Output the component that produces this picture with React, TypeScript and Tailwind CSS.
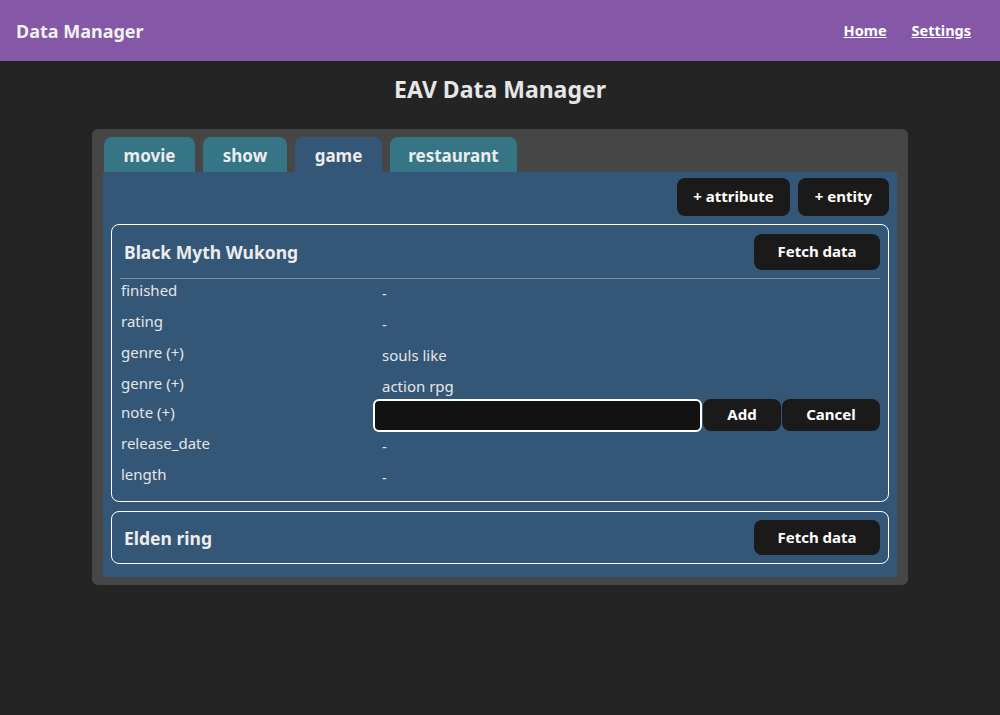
import { useState } from 'react';

const tabs = [
  { name: 'movie', w: 'w-[91px]' },
  { name: 'show', w: 'w-[84px]' },
  { name: 'game', w: 'w-[87px]' },
  { name: 'restaurant', w: 'w-[127px]' },
];

const rows = [
  { label: 'finished', value: '-', h: 'h-[31px]' },
  { label: 'rating', value: '-', h: 'h-[31px]' },
  { label: 'genre (+)', value: 'souls like', h: 'h-[31px]' },
  { label: 'genre (+)', value: 'action rpg', h: 'h-[29px]' },
  { label: 'note (+)', value: null, h: 'h-[31px]' },
  { label: 'release_date', value: '-', h: 'h-[31px]' },
  { label: 'length', value: '-', h: 'h-[31px]' },
];

function DarkButton({ children, className = '' }: { children: React.ReactNode; className?: string }) {
  return (
    <button className={`bg-[#1a1a1a] text-white font-bold text-[15px] rounded-lg ${className}`}>
      {children}
    </button>
  );
}

export default function App() {
  const [active, setActive] = useState('game');

  return (
    <div className="min-h-[715px] bg-[#242424] text-[#e6e6e6] font-['Noto_Sans',sans-serif]">
      <header className="h-[61px] bg-[#8458a6] flex items-center justify-between pl-4 pr-[29px]">
        <span className="text-[18px] font-bold text-[#f2f2f2] pt-[1px]">Data Manager</span>
        <nav className="flex gap-[25px] text-[14.5px] font-bold text-white">
          <a href="#" className="underline">Home</a>
          <a href="#" className="underline">Settings</a>
        </nav>
      </header>

      <h1 className="text-center text-[23px] font-bold text-[#e6e6e6] pt-[11px] pb-[22px]">EAV Data Manager</h1>

      <div className="mx-auto w-[816px] bg-[#464646] rounded-md pt-2 px-[11px] pb-2">
        <div className="flex gap-2 pl-px">
          {tabs.map((t) => (
            <button
              key={t.name}
              onClick={() => setActive(t.name)}
              className={`h-[35px] ${t.w} pt-[3px] rounded-t-lg text-[17px] font-bold text-[#ececec] ${
                t.name === active ? 'bg-[#345677]' : 'bg-[#367586]'
              }`}
            >
              {t.name}
            </button>
          ))}
        </div>

        <div className="bg-[#345677] px-2 pt-[6px] pb-[13px]">
          <div className="flex justify-end gap-2">
            <DarkButton className="h-[38px] w-[113px]">+ attribute</DarkButton>
            <DarkButton className="h-[38px] w-[91px]">+ entity</DarkButton>
          </div>

          <div className="mt-2 border border-white rounded-lg px-2 pt-[9px] pb-[7px]">
            <div className="flex items-center justify-between pl-[4px] pb-2 border-b border-[#7d8fa3]">
              <span className="text-[17.5px] font-bold text-[#ececec] pt-px">Black Myth Wukong</span>
              <DarkButton className="h-[36px] w-[126px]">Fetch data</DarkButton>
            </div>
            <div className="text-[15px] text-[#e6e6e6]">
              {rows.map((r, i) => (
                <div key={i} className={`grid grid-cols-[253px_1fr] ${r.h}`}>
                  <div className="pl-px leading-[22px]">{r.label}</div>
                  {r.value === null ? (
                    <div className="flex gap-px -mt-[2px]">
                      <input className="w-[329px] h-[33px] bg-[#121212] border-2 border-white rounded-md outline-none text-white px-2" />
                      <DarkButton className="h-[32px] w-[78px]">Add</DarkButton>
                      <DarkButton className="h-[32px] w-[98px]">Cancel</DarkButton>
                    </div>
                  ) : (
                    <div className="pl-[9px] pt-[3px] leading-[22px]">{r.value}</div>
                  )}
                </div>
              ))}
            </div>
          </div>

          <div className="mt-[9px] border border-white rounded-lg px-2 h-[53px] flex items-center justify-between">
            <span className="pl-[4px] pt-[2px] text-[17.5px] font-bold text-[#ececec]">Elden ring</span>
            <DarkButton className="h-[35px] w-[126px]">Fetch data</DarkButton>
          </div>
        </div>
      </div>
    </div>
  );
}
